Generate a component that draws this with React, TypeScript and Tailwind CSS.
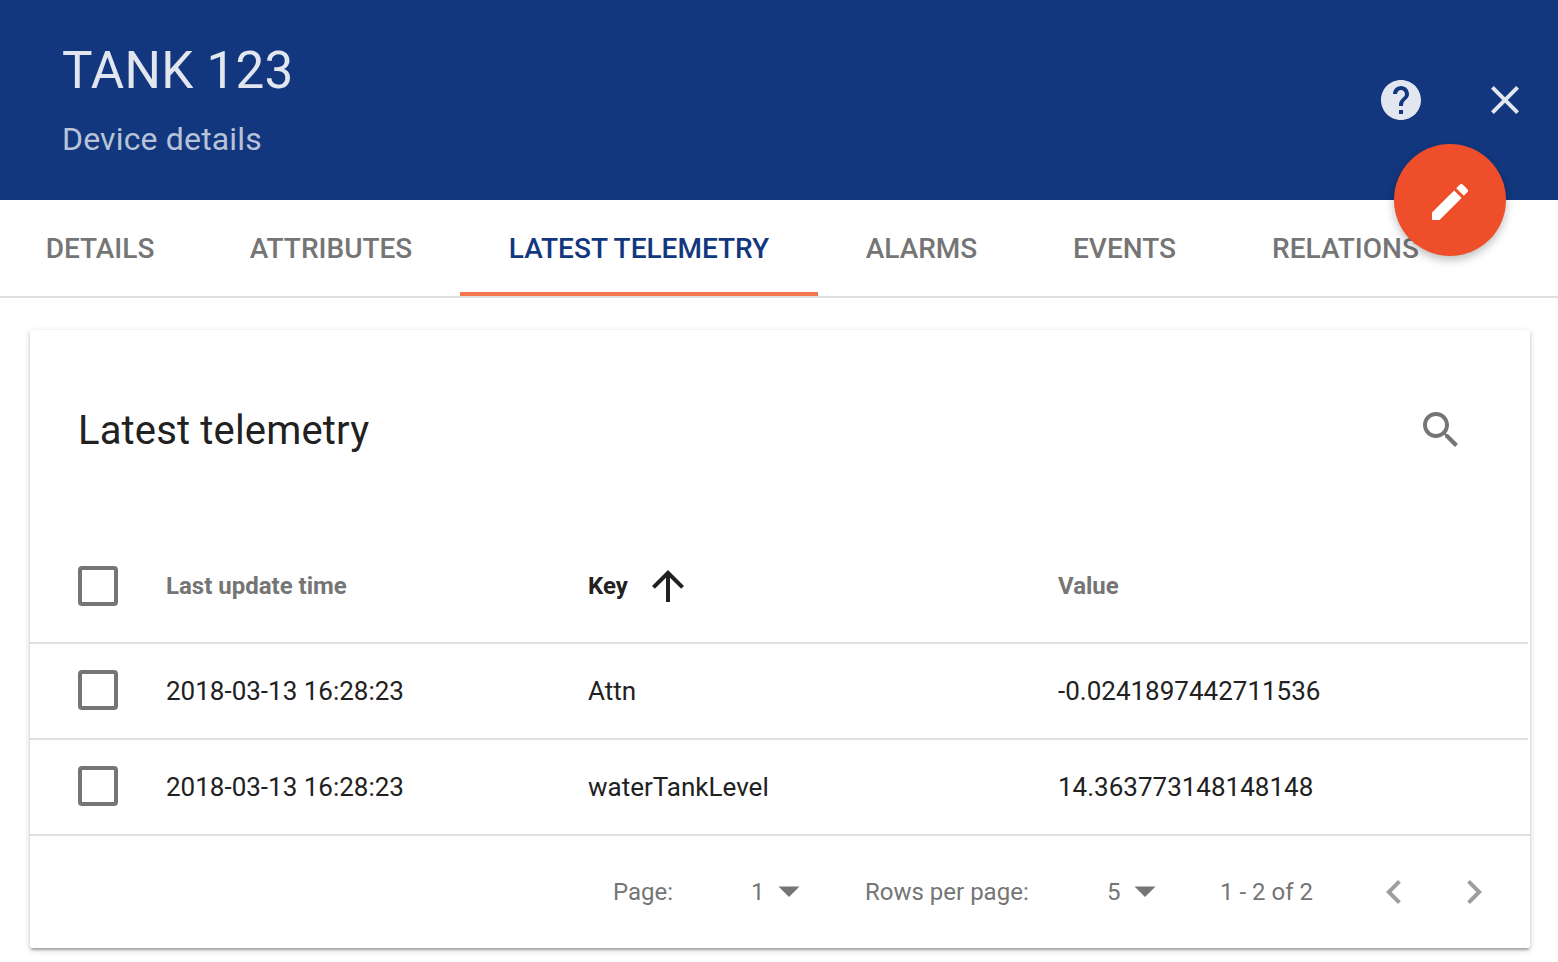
import React from "react";

type IconProps = { path: string; className?: string };

function Icon({ path, className = "" }: IconProps) {
  return (
    <svg viewBox="0 0 24 24" fill="currentColor" className={`block size-12 shrink-0 ${className}`}>
      <path d={path} />
    </svg>
  );
}

const icons = {
  help: "M12 2C6.48 2 2 6.48 2 12s4.48 10 10 10 10-4.48 10-10S17.52 2 12 2zm1 17h-2v-2h2v2zm2.07-7.75l-.9.92C13.45 12.9 13 13.5 13 15h-2v-.5c0-1.1.45-2.1 1.17-2.83l1.24-1.26c.37-.36.59-.86.59-1.41 0-1.1-.9-2-2-2s-2 .9-2 2H8c0-2.21 1.79-4 4-4s4 1.79 4 4c0 .88-.36 1.68-.93 2.25z",
  close: "M19 6.41L17.59 5 12 10.59 6.41 5 5 6.41 10.59 12 5 17.59 6.41 19 12 13.41 17.59 19 19 17.59 13.41 12z",
  edit: "M3 17.25V21h3.75L17.81 9.94l-3.75-3.75L3 17.25zM20.71 7.04c.39-.39.39-1.02 0-1.41l-2.34-2.34c-.39-.39-1.02-.39-1.41 0l-1.83 1.83 3.75 3.75 1.83-1.83z",
  search: "M15.5 14h-.79l-.28-.27C15.41 12.59 16 11.11 16 9.5 16 5.91 13.09 3 9.5 3S3 5.91 3 9.5 5.91 16 9.5 16c1.61 0 3.09-.59 4.23-1.57l.27.28v.79l5 4.99L20.49 19l-4.99-5zm-6 0C7.01 14 5 11.99 5 9.5S7.01 5 9.5 5 14 7.01 14 9.5 11.99 14 9.5 14z",
  up: "M4 12l1.41 1.41L11 7.83V20h2V7.83l5.58 5.59L20 12l-8-8-8 8z",
  left: "M15.41 7.41L14 6l-6 6 6 6 1.41-1.41L10.83 12z",
  right: "M10 6L8.59 7.41 13.17 12l-4.58 4.59L10 18l6-6z",
};

const tabs = [
  { label: "DETAILS", width: "w-[204px]" },
  { label: "ATTRIBUTES", width: "w-[258px]" },
  { label: "LATEST TELEMETRY", width: "w-[358px]", active: true },
  { label: "ALARMS", width: "w-[207px]" },
  { label: "EVENTS", width: "w-[199px]" },
  { label: "RELATIONS", width: "w-[243px]" },
];

const rows = [
  { time: "2018-03-13 16:28:23", name: "Attn", value: "-0.0241897442711536" },
  { time: "2018-03-13 16:28:23", name: "waterTankLevel", value: "14.363773148148148" },
];

const Checkbox = ({ className = "" }: { className?: string }) => (
  <span className={`block size-10 rounded-[4px] border-4 border-[#757575] ${className}`} />
);

const Caret = () => (
  <svg viewBox="0 0 22 12" className="block h-3 w-[22px] shrink-0" fill="currentColor">
    <path d="M.5.5h21L11 11z" />
  </svg>
);

const columns = "grid grid-cols-[88px_422px_470px_1fr] items-center pl-12";

export default function App() {
  return (
    <div className="h-[962px] w-[1558px] overflow-hidden bg-white font-['Roboto',sans-serif] tracking-[0.01em] text-[#212121]">
      <header className="relative flex h-[200px] items-center justify-between bg-[#12377e] pr-[29px] pl-[62px]">
        <div className="flex flex-col">
          <h1 className="text-[51.2px] leading-[80px] tracking-[0.005em] text-[#e2e6ef]">TANK 123</h1>
          <p className="-mt-px pb-px text-[32px] leading-[58px] text-[#b8c3d8]">Device details</p>
        </div>
        <div className="flex gap-14 text-[#e2e6ef]">
          <Icon path={icons.help} />
          <Icon path={icons.close} />
        </div>
        <button className="absolute top-[144px] right-[52px] z-10 flex size-28 items-center justify-center rounded-full bg-[#ee4f2a] pt-1 text-white shadow-[0_4px_10px_rgba(0,0,0,0.26)]">
          <Icon path={icons.edit} />
        </button>
      </header>

      <nav className="flex h-[98px] border-b-2 border-[#e0e0e0] text-[28px] font-medium tracking-normal text-[#757575]">
        <div className="-ml-0.5 flex">
          {tabs.map((t) => (
            <div
              key={t.label}
              className={`flex h-24 items-center justify-center whitespace-nowrap ${t.width} ${
                t.active ? "border-b-4 border-[#f4774f] pt-1.5 text-[#12377e]" : "pt-0.5"
              }`}
            >
              {t.label}
            </div>
          ))}
        </div>
      </nav>

      <main className="px-[30px] pt-8">
        <section className="h-[618px] w-[1500px] rounded-[2px] bg-white shadow-[0_2px_6px_rgba(0,0,0,0.2),0_2px_2px_rgba(0,0,0,0.14),0_4px_2px_-2px_rgba(0,0,0,0.12)]">
          <div className="flex h-[200px] items-center justify-between pr-[65px] pl-12">
            <h2 className="pt-0.5 text-[40px] tracking-[0.004em]">Latest telemetry</h2>
            <Icon path={icons.search} className="text-[#757575]" />
          </div>
          <div className={`${columns} h-[114px] w-[1498px] border-b-2 border-[#e0e0e0] text-[24px] font-bold tracking-normal text-[#757575]`}>
            <Checkbox />
            <span>Last update time</span>
            <span className="flex items-center gap-4 text-[#212121]">
              Key
              <Icon path={icons.up} />
            </span>
            <span>Value</span>
          </div>
          {rows.map((r) => (
            <div
              key={r.name}
              className={`${columns} h-24 w-[1498px] border-b-2 border-[#e0e0e0] text-[26px] tracking-normal last-of-type:w-full`}
            >
              <Checkbox className="mb-0.5" />
              <span>{r.time}</span>
              <span>{r.name}</span>
              <span>{r.value}</span>
            </div>
          ))}
          <footer className="flex h-28 items-center pl-[583px] text-[24px] tracking-normal whitespace-nowrap text-[#757575]">
            <span className="w-[138px]">Page:</span>
            <span className="flex w-[114px] items-center gap-[13px]">
              1
              <Caret />
            </span>
            <span className="w-[242px]">Rows per page:</span>
            <span className="flex w-[113px] items-center gap-[13px]">
              5
              <Caret />
            </span>
            <span className="w-[150px]">1 - 2 of 2</span>
            <div className="flex gap-8 text-[#9e9e9e]">
              <Icon path={icons.left} />
              <Icon path={icons.right} />
            </div>
          </footer>
        </section>
      </main>
    </div>
  );
}
